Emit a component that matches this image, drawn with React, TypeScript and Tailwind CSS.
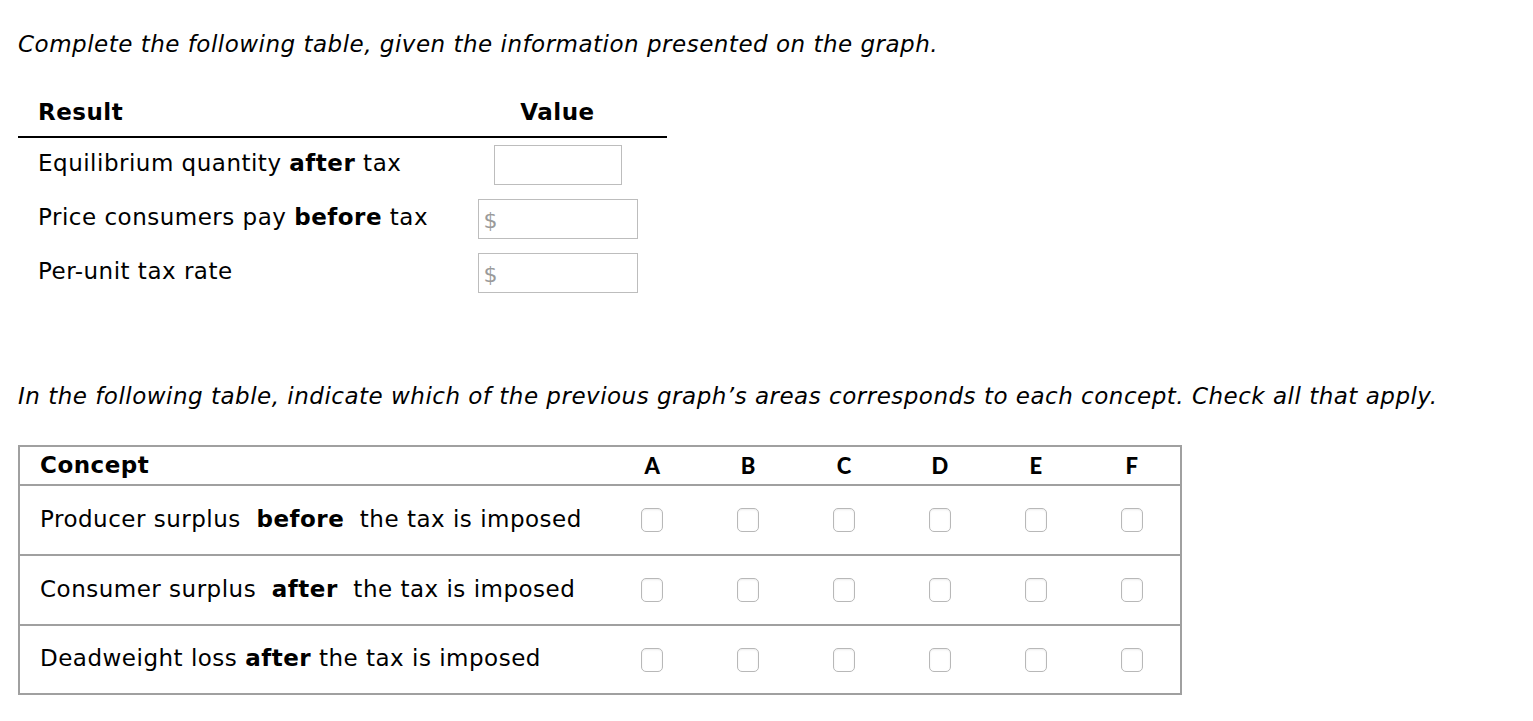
import React from 'react';

const font = { fontFamily: '"DejaVu Sans", Verdana, sans-serif' };

const results = [
    { pre: 'Equilibrium quantity ', bold: 'after', post: ' tax', dollar: false },
    { pre: 'Price consumers pay ', bold: 'before', post: ' tax', dollar: true },
    { pre: 'Per-unit tax rate', bold: '', post: '', dollar: true },
];

const concepts = [
    { pre: 'Producer surplus\u00a0 ', bold: 'before', post: '\u00a0 the tax is imposed' },
    { pre: 'Consumer surplus\u00a0 ', bold: 'after', post: '\u00a0 the tax is imposed' },
    { pre: 'Deadweight loss ', bold: 'after', post: ' the tax is imposed' },
];

const areas = ['A', 'B', 'C', 'D', 'E', 'F'];

function Checkbox() {
    return (
        <div className="w-[22px] h-[24px] rounded-[5px] border border-[#b8b8b8] bg-white shadow-[inset_0_1px_2px_rgba(0,0,0,0.08)]" />
    );
}

export default function App() {
    return (
        <div className="bg-white min-h-[721px] pl-[18px] pt-[32px] text-black text-[23px] tracking-[0.5px]" style={font}>
            <p className="italic leading-[24px] whitespace-nowrap">
                Complete the following table, given the information presented on the graph.
            </p>

            {/* result table */}
            <div className="w-[649px] mt-[33px]">
                <div className="flex h-[49px] items-center border-b-2 border-black">
                    <div className="w-[430px] pl-[20px] font-bold">Result</div>
                    <div className="w-[219px] text-center font-bold">Value</div>
                </div>
                {results.map((r, i) => (
                    <div key={i} className="flex h-[54px] items-center">
                        <div className="w-[430px] pl-[20px] -mt-[3px] whitespace-nowrap">
                            {r.pre}{r.bold && <b>{r.bold}</b>}{r.post}
                        </div>
                        <div className="w-[219px] flex justify-center">
                            {r.dollar ? (
                                <div className="w-[160px] h-[40px] border border-[#bdbdbd] flex items-center pl-[5px] pt-[3px] text-[#9a9a9a] text-[22px]">$</div>
                            ) : (
                                <div className="w-[128px] h-[40px] border border-[#bdbdbd]" />
                            )}
                        </div>
                    </div>
                ))}
            </div>

            <p className="italic leading-[24px] mt-[84px] whitespace-nowrap">
                In the following table, indicate which of the previous graph’s areas corresponds to each concept. Check all that apply.
            </p>

            {/* concept table */}
            <div className="w-[1164px] mt-[37px] border-2 border-[#a0a0a0]">
                <div className="flex h-[39px] items-center border-b-2 border-[#a0a0a0]">
                    <div className="w-[585px] pl-[20px] font-bold">Concept</div>
                    {areas.map(a => (
                        <div key={a} className="w-[96px] text-center text-[22px]" style={{ fontFamily: 'Lato, sans-serif', fontWeight: 900 }}>{a}</div>
                    ))}
                </div>
                {concepts.map((c, i) => (
                    <div key={i} className={`flex items-center ${i < concepts.length - 1 ? 'h-[70px] border-b-2 border-[#a0a0a0]' : 'h-[67px]'}`}>
                        <div className="w-[585px] pl-[20px] -mt-[2px] whitespace-nowrap">
                            {c.pre}<b>{c.bold}</b>{c.post}
                        </div>
                        {areas.map(a => (
                            <div key={a} className="w-[96px] flex justify-center">
                                <Checkbox />
                            </div>
                        ))}
                    </div>
                ))}
            </div>
        </div>
    );
}
